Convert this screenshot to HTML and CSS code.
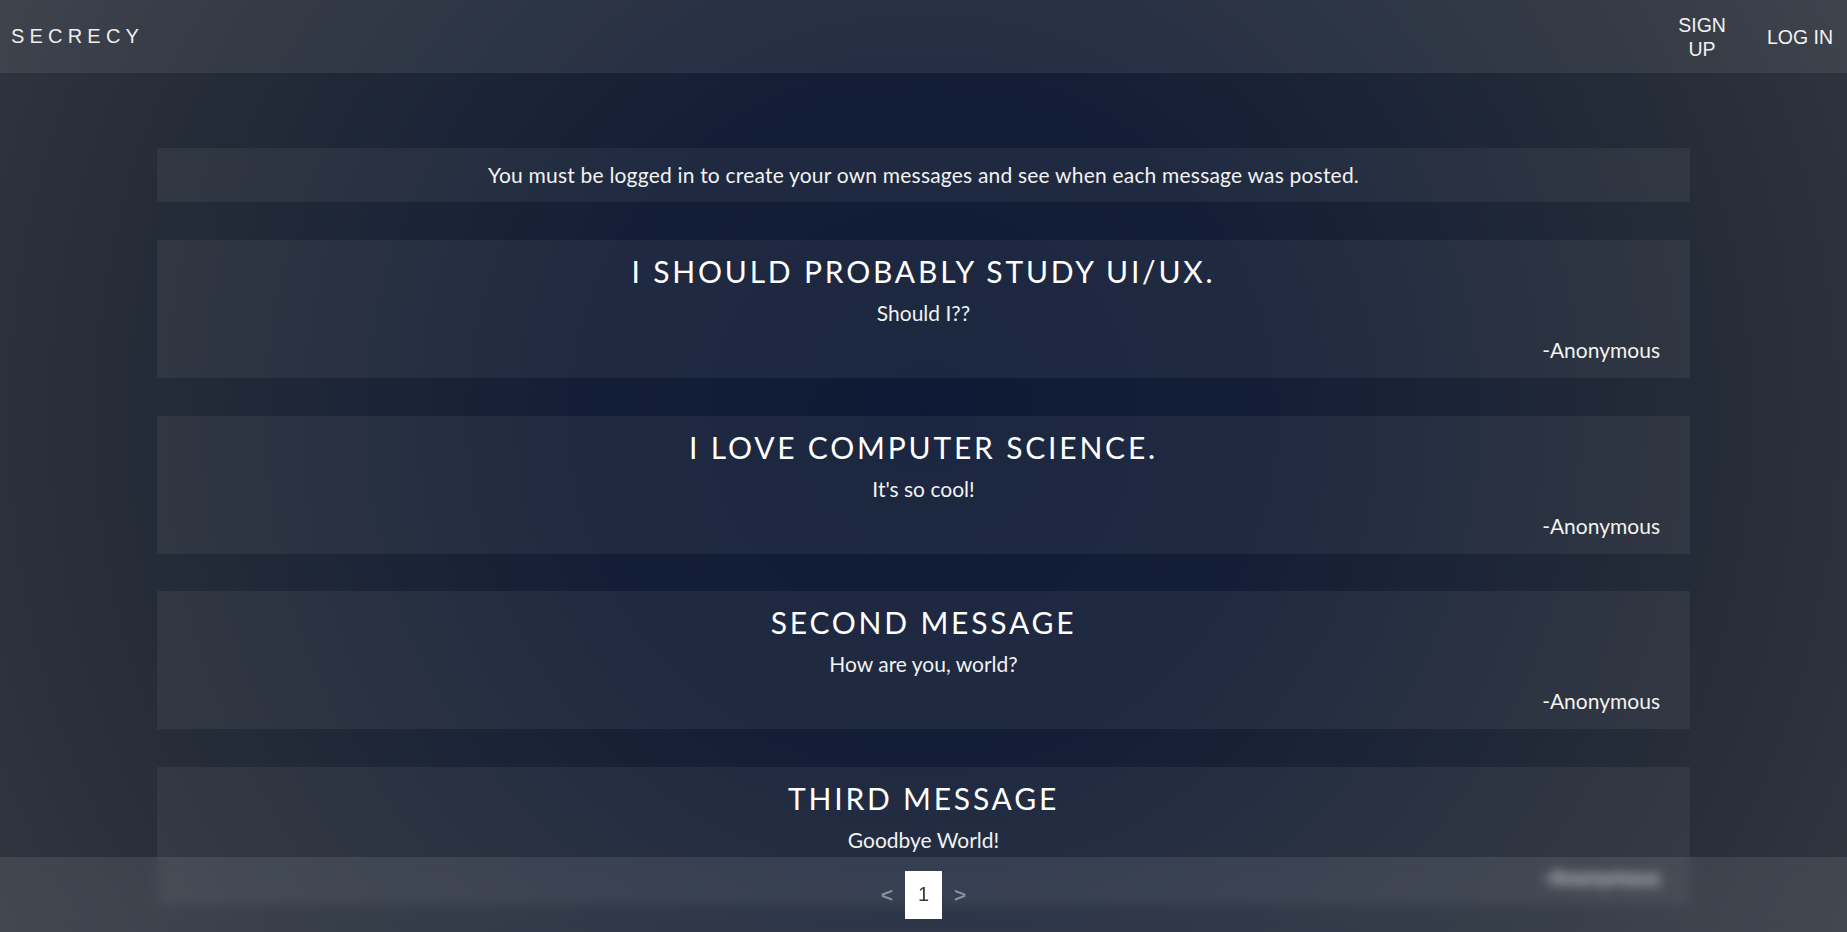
FILE: index.html
```html
<!DOCTYPE html>
<html lang="en">
<head>
<meta charset="utf-8">
<title>Secrecy</title>
<link rel="stylesheet" href="styles.css">
</head>
<body>
<header class="topbar">
  <a class="brand" href="#">SECRECY</a>
  <nav class="nav">
    <a class="nav-link nav-link-stacked" href="#">SIGN UP</a>
    <a class="nav-link" href="#">LOG IN</a>
  </nav>
</header>
<main class="feed">
  <p class="notice">You must be logged in to create your own messages and see when each message was posted.</p>
  <article class="message">
    <h2 class="message-title">I should probably study UI/UX.</h2>
    <p class="message-body">Should I??</p>
    <p class="message-author">-Anonymous</p>
  </article>
  <article class="message">
    <h2 class="message-title">I love computer science.</h2>
    <p class="message-body">It's so cool!</p>
    <p class="message-author">-Anonymous</p>
  </article>
  <article class="message">
    <h2 class="message-title">Second message</h2>
    <p class="message-body">How are you, world?</p>
    <p class="message-author">-Anonymous</p>
  </article>
  <article class="message">
    <h2 class="message-title">Third message</h2>
    <p class="message-body">Goodbye World!</p>
    <p class="message-author">-Anonymous</p>
  </article>
</main>
<footer class="pager">
  <a class="pager-arrow" href="#">&lt;</a>
  <span class="pager-page">1</span>
  <a class="pager-arrow" href="#">&gt;</a>
</footer>
</body>
</html>
```
FILE: styles.css
```css
html {
  min-height: 100%;
  background: radial-gradient(circle at 50% 45%, #0e1a35 0%, #131e36 32%, #252c38 75%, #31363f 100%) fixed;
}

body {
  margin: 0;
  min-height: 100vh;
  font-family: Lato, "Open Sans", sans-serif;
  color: #f2f2f2;
}

a {
  color: inherit;
  text-decoration: none;
}

.topbar {
  height: 73px;
  display: flex;
  align-items: center;
  justify-content: space-between;
  background: rgba(255, 255, 255, 0.075);
}

.brand {
  padding-left: 11px;
  font-family: "Liberation Sans", Arial, sans-serif;
  font-size: 20px;
  letter-spacing: 5.2px;
  color: #eeeeee;
}

.nav {
  display: flex;
  align-items: center;
  gap: 41px;
  padding-right: 14px;
}

.nav-link {
  font-family: "Liberation Sans", Arial, sans-serif;
  font-size: 19.5px;
  line-height: 24px;
  color: #f2f2f2;
  text-align: center;
}

.nav-link-stacked {
  width: min-content;
}

.feed {
  width: 83%;
  margin: 0 auto;
  padding: 75px 0 20px;
  display: flex;
  flex-direction: column;
  gap: 37.5px;
}

.notice {
  margin: 0 0 0.5px;
  height: 54px;
  line-height: 53px;
  text-align: center;
  font-size: 21px;
  letter-spacing: 0.2px;
  background: rgba(255, 255, 255, 0.055);
}

.message {
  height: 138px;
  box-sizing: border-box;
  padding: 16px 30px 18px;
  display: flex;
  flex-direction: column;
  gap: 17px;
  background: rgba(255, 255, 255, 0.055);
}

.message-title {
  margin: 0;
  font-size: 30px;
  line-height: 30px;
  font-weight: 400;
  letter-spacing: 2.8px;
  text-transform: uppercase;
  text-align: center;
  color: #ffffff;
}

.message-body {
  margin: 0;
  font-size: 21px;
  line-height: 20px;
  text-align: center;
}

.message-author {
  margin: 0;
  font-size: 21px;
  line-height: 20px;
  text-align: right;
}

.pager {
  position: fixed;
  left: 0;
  right: 0;
  bottom: 0;
  height: 75px;
  display: flex;
  align-items: center;
  justify-content: center;
  gap: 12px;
  background: rgba(255, 255, 255, 0.09);
  backdrop-filter: blur(6px);
  font-family: "Liberation Sans", Arial, sans-serif;
}

.pager-arrow {
  font-size: 21px;
  font-weight: 700;
  color: #8a9099;
}

.pager-page {
  width: 37px;
  height: 48px;
  display: flex;
  align-items: center;
  justify-content: center;
  background: #ffffff;
  color: #333a45;
  font-size: 20px;
}
```
